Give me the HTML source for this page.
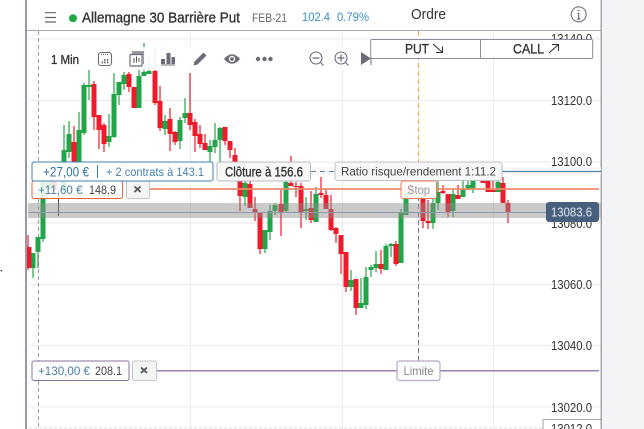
<!DOCTYPE html>
<html lang="fr"><head><meta charset="utf-8"><title>Ordre</title>
<style>
html,body{margin:0;padding:0;background:#fff;width:644px;height:429px;overflow:hidden}
svg{display:block;filter:blur(.3px)}
text{font-family:"Liberation Sans",sans-serif}
.m{stroke:#333;stroke-width:.35}
</style></head><body>
<svg width="644" height="429" viewBox="0 0 644 429" xmlns="http://www.w3.org/2000/svg">
<rect width="644" height="429" fill="#fff"/>
<rect x="602" y="0" width="42" height="429" fill="#f3f4f6"/>
<!-- grid -->
<path d="M29 39H601M29 100.5H601M29 162H601M29 223H601M29 284.5H601M29 345.5H601M29 407H601M190.5 31V429M342.5 31V429M493.5 31V429" stroke="#ebebef" stroke-width="1" fill="none"/>
<path d="M29 428H601" stroke="#ddd" stroke-dasharray="3 2"/>
<path d="M38.5 31V429" stroke="#a09cb0" stroke-dasharray="4 3" fill="none"/>
<path d="M418.5 31V178" stroke="#f5a623" stroke-dasharray="5 3" fill="none"/>
<path d="M418.5 180V361" stroke="#8d6fa8" stroke-dasharray="5 3" fill="none"/>
<!-- axis -->
<g font-size="12.5" fill="#333">
<text x="551" y="43" textLength="41" lengthAdjust="spacingAndGlyphs">13140.0</text>
<text x="551" y="105" textLength="41" lengthAdjust="spacingAndGlyphs">13120.0</text>
<text x="551" y="166" textLength="41" lengthAdjust="spacingAndGlyphs">13100.0</text>
<text x="551" y="228" textLength="41" lengthAdjust="spacingAndGlyphs">13080.0</text>
<text x="551" y="289" textLength="41" lengthAdjust="spacingAndGlyphs">13060.0</text>
<text x="551" y="350" textLength="41" lengthAdjust="spacingAndGlyphs">13040.0</text>
<text x="551" y="412" textLength="41" lengthAdjust="spacingAndGlyphs">13020.0</text>
</g>
<!-- candles green wicks -->
<path fill="none" stroke="#21a548" stroke-width="1.2" d="M33 253V278M38 237V268M43 180V242M64 125V165M69 121V158M79 112V165M84 83V135M89 70V100M109 114V147M114 73V138M119 82V105M124 72V90M139 65V108M144 43V72M149 55V72M165 115V135M180 117V149M185 98V123M210 140V162M215 123V153M220 127V162M245 181V206M265 230V253M270 205V240M275 203V215M286 180V212M306 197V220M316 187V222M351 270V291M361 278V308M366 267V309M371 265V277M376 251V272M386 244V270M391 243V257M401 209V263M406 185V215M433 195V229M438 180V210M453 190V217M463 180V197M468 178V190M473 175V193M498 180V192"/>
<!-- green bodies -->
<path fill="none" stroke="#21a548" stroke-width="5" d="M33 253V268M38 237V252M43 180V239M49 165V190M64 150V190M69 134V152M79 130V165M84 85V133M89 85V87M109 136V142M114 94V137M119 82V95M124 75V84M139 76V108M144 72V76M149 71V74M165 121V129M180 120V141M185 113V118M210 146V152M215 140V147M220 128V140M245 183V197M265 230V249M270 211V232M275 205V211M286 182V211M306 209V211M316 194V222M351 280V287M361 303V308M366 277V305M371 267V270M376 264V268M386 246V270M391 244V246M401 213V263M406 193V215M433 203V223M438 192V203M453 194V211M463 189V197M468 185V190M473 180V189M498 182V192"/>
<!-- red wicks -->
<path fill="none" stroke="#ee1c2b" stroke-width="1.2" d="M28 235V270M74 126V165M94 81V130M99 115V149M104 123V152M129 72V92M134 87V108M155 48V105M160 86V131M170 108V151M175 131V145M190 73V130M195 119V152M200 125V148M205 134V149M225 127V145M230 141V158M235 148V180M240 175V211M250 180V208M255 197V221M260 213V254M281 190V236M291 156V186M296 182V197M301 183V228M311 191V223M321 177V198M326 188V209M331 195V231M336 227V243M341 235V274M346 252V292M356 279V315M381 250V274M396 241V266M411 185V197M423 190V228M428 200V229M443 185V194M448 194V217M458 185V199M483 170V183M488 175V192M493 175V192M503 177V203M508 200V223"/>
<!-- red bodies -->
<path fill="none" stroke="#ee1c2b" stroke-width="5" d="M29 247V268M54 165V190M74 142V165M94 84V117M99 115V130M104 125V144M129 74V87M134 87V108M155 71V103M160 101V128M170 119V134M175 132V142M190 113V125M195 122V136M200 134V144M205 143V150M225 127V141M230 141V150M235 155V180M240 181V196M250 184V208M255 209V213M260 213V249M281 204V212M291 183V186M296 186V187M301 186V212M311 208V220M321 193V195M326 195V209M331 209V230M336 228V234M341 235V254M346 252V287M356 279V308M381 264V269M396 244V264M411 185V192M423 198V221M428 221V223M443 191V193M448 194V212M458 195V199M483 170V183M488 175V192M493 190V192M503 183V203M508 203V213"/>
<path d="M58.5 190V216" stroke="#444" stroke-width="1"/>
<!-- band -->
<rect x="28" y="203" width="573" height="15" fill="#8c8c8c" fill-opacity=".46"/>
<path d="M28 212.5H546" stroke="#8e98a8" stroke-width="1"/>
<!-- frame -->
<rect x="25" y="0" width="2" height="429" fill="#9a97a8"/>
<rect x="600.5" y="0" width="1.5" height="429" fill="#a5a3b0"/>
<rect x="27" y="0" width="573.5" height="30" fill="#fff"/>
<rect x="27" y="30" width="574" height="1" fill="#aaa8b5"/>
<path d="M0 270h2v1.5h-1z" fill="#555"/>
<!-- header -->
<path d="M45 12.7H56M45 17.5H56M45 22H56" stroke="#666" stroke-width="1.2"/>
<circle cx="73" cy="18.3" r="4" fill="#1fa84a"/>
<text class="m" x="82" y="22.500" font-size="15" fill="#333" textLength="158" lengthAdjust="spacingAndGlyphs">Allemagne 30 Barrière Put</text>
<text x="252" y="22" font-size="11.500" fill="#666" textLength="35" lengthAdjust="spacingAndGlyphs">FEB-21</text>
<text x="302" y="21" font-size="12" fill="#3d8ec9" textLength="28" lengthAdjust="spacingAndGlyphs">102.4</text>
<text x="337" y="21" font-size="12" fill="#3d8ec9" textLength="32" lengthAdjust="spacingAndGlyphs">0.79%</text>
<text x="411" y="19" font-size="14.500" fill="#333" textLength="35" lengthAdjust="spacingAndGlyphs">Ordre</text>
<circle cx="578.7" cy="14.3" r="7.5" fill="none" stroke="#73717f" stroke-width="1.1"/>
<path d="M577.5 10.5h2M578.7 13v6M577 19h3.4M577.3 13.2h1.4" stroke="#73717f" stroke-width="1.2" fill="none"/>
<!-- toolbar -->
<rect x="45" y="47" width="326" height="23" fill="#fff" fill-opacity=".9"/>
<text class="m" x="51" y="64" font-size="13" fill="#333" textLength="28" lengthAdjust="spacingAndGlyphs">1 Min</text>
<rect x="98.5" y="52.5" width="13" height="13" rx="2.5" fill="none" stroke="#6d6b7a" stroke-width="1.1" />
<path d="M101 54.5h8" stroke="#6d6b7a" stroke-dasharray="1 1"/>
<path d="M104 60h1.6M106.8 60h1.6M101.5 62.5h1.6M104 62.5h1.6M106.8 62.5h1.6" stroke="#555" stroke-width="1.5"/>
<rect x="132" y="51" width="12" height="4" fill="#9a98a4"/>
<rect x="143" y="52" width="1" height="12" fill="#9a98a4"/>
<rect x="130" y="54.5" width="12" height="11.5" rx="1" fill="#fff" stroke="#6d6b7a" stroke-width="1.2"/>
<path d="M134 58v5M136.5 56.5v6M139 58v4" stroke="#555" stroke-width="1"/>
<path d="M161 59h4v5h-4zM166.5 53h4v11h-4zM171.5 57h3.5v7h-3.5z" fill="#6d6b7a"/>
<path d="M161 65h14" stroke="#6d6b7a" stroke-width="1"/>
<path d="M193.5 65.5l1-4 9-9 3 3-9 9z" fill="#6d6b7a"/>
<path d="M224 59q8-9.500 16 0q-8 9.500-16 0z" fill="#6d6b7a"/>
<circle cx="232" cy="59" r="3.2" fill="#fff"/><circle cx="232" cy="59" r="1.9" fill="#6d6b7a"/>
<circle cx="258" cy="59" r="2.2" fill="#6d6b7a"/><circle cx="264.500" cy="59" r="2.2" fill="#6d6b7a"/><circle cx="270.500" cy="59" r="2.2" fill="#6d6b7a"/>
<circle cx="316" cy="58" r="6" fill="#fff" stroke="#6d6b7a" stroke-width="1.1"/>
<path d="M312.500 58h7M320.500 62.500l3 3" stroke="#6d6b7a" stroke-width="1.2"/>
<circle cx="341" cy="58" r="6" fill="#fff" stroke="#6d6b7a" stroke-width="1.1"/>
<path d="M337.500 58h7M341 54.500v7M345.500 62.500l3 3" stroke="#6d6b7a" stroke-width="1.2"/>
<path d="M361 52l10 6.500-10 6.500z" fill="#6d6b7a"/>
<path d="M371 58v7" stroke="#6d6b7a"/>
<!-- PUT CALL -->
<rect x="370.700" y="39.500" width="222" height="19" rx="1.500" fill="#fff" stroke="#8f8c9c"/>
<path d="M480.500 39.500V58.500" stroke="#8f8c9c"/>
<text class="m" x="405" y="53.500" font-size="14" fill="#333" textLength="24" lengthAdjust="spacingAndGlyphs">PUT</text>
<path d="M433 44l9.500 8.500M442.500 46.500v6h-6.500" fill="none" stroke="#333" stroke-width="1.1"/>
<text class="m" x="513" y="53.500" font-size="14" fill="#333" textLength="31" lengthAdjust="spacingAndGlyphs">CALL</text>
<path d="M549 53l9.500-8.500M552 44.500h6.500v6.500" fill="none" stroke="#333" stroke-width="1.1"/>
<!-- lines -->
<rect x="310" y="167" width="291" height="8" fill="#f6f6f8" fill-opacity=".8"/>
<path d="M311 171.500h24" stroke="#4d86a8" stroke-dasharray="5 4"/>
<path d="M500 171.500H601" stroke="#4d86a8" stroke-width="1.200"/>
<path d="M150 189H599" stroke="#ef8a6b" stroke-width="1.800"/>
<path d="M157 370.700H599" stroke="#9b80b0" stroke-width="1.500"/>
<!-- tag -->
<rect x="546" y="202" width="53" height="20" rx="3" fill="#46607e"/>
<text x="551" y="216.500" font-size="12.500" fill="#e6ebf0" textLength="41" lengthAdjust="spacingAndGlyphs">13083.6</text>
<!-- labels -->
<rect x="32" y="181" width="90.500" height="17.500" rx="2" fill="#fff" fill-opacity=".86" stroke="#e8623c"/>
<text x="38" y="194" font-size="12" fill="#4580a8" textLength="44.500" lengthAdjust="spacingAndGlyphs">+11,60 €</text>
<text x="89" y="194" font-size="12" fill="#444" textLength="27" lengthAdjust="spacingAndGlyphs">148.9</text>
<rect x="126.500" y="181" width="23" height="17.500" rx="2" fill="#f5f5f6" stroke="#c5c5cc"/>
<path d="M134.500 186.500l6 5.500M140.500 186.500l-6 5.500" stroke="#555" stroke-width="1.800"/>
<rect x="32" y="162" width="181" height="19" rx="2" fill="#fff" stroke="#3f80ab"/>
<text x="43" y="176.500" font-size="13.500" fill="#2f74a6" textLength="46" lengthAdjust="spacingAndGlyphs">+27,00 €</text>
<path d="M97.500 165V178" stroke="#3f80ab"/>
<text x="106" y="176" font-size="12" fill="#4580a8" textLength="98" lengthAdjust="spacingAndGlyphs">+ 2 contrats à 143.1</text>
<rect x="217" y="162" width="93.500" height="19" rx="2.500" fill="#f7f7f8" stroke="#b8b8c0"/>
<text class="m" x="225" y="176.500" font-size="13.500" fill="#333" textLength="78" lengthAdjust="spacingAndGlyphs">Clôture à 156.6</text>
<rect x="335" y="162" width="167" height="18.500" rx="2.500" fill="#f7f7f8" stroke="#c0c0c8"/>
<text x="341" y="175.500" font-size="12" fill="#444" textLength="155" lengthAdjust="spacingAndGlyphs">Ratio risque/rendement 1:11.2</text>
<rect x="401" y="181" width="35.500" height="17.500" rx="2" fill="#fff" fill-opacity=".88" stroke="#ec7a58"/>
<text x="407" y="194" font-size="12" fill="#9a9a9e" textLength="23" lengthAdjust="spacingAndGlyphs">Stop</text>
<rect x="32" y="361" width="97" height="19.500" rx="2" fill="#fff" stroke="#8a6f9e"/>
<text x="38" y="375" font-size="12" fill="#4580a8" textLength="52" lengthAdjust="spacingAndGlyphs">+130,00 €</text>
<text x="95" y="375" font-size="12" fill="#444" textLength="27" lengthAdjust="spacingAndGlyphs">208.1</text>
<rect x="132.500" y="361" width="24" height="19.500" rx="2" fill="#f5f5f6" stroke="#c5c5cc"/>
<path d="M141 367.500l6 5.500M147 367.500l-6 5.500" stroke="#555" stroke-width="1.800"/>
<rect x="397" y="361" width="43" height="19.500" rx="2.500" fill="#fff" stroke="#b9a8c8" stroke-width="1.200"/>
<text x="403.500" y="375" font-size="12" fill="#888" textLength="30" lengthAdjust="spacingAndGlyphs">Limite</text>
<!-- bottom box -->
<rect x="543" y="419.500" width="58" height="12" fill="#fff" stroke="#a5a3b0"/>
<text x="551" y="433" font-size="12.500" fill="#333" textLength="41" lengthAdjust="spacingAndGlyphs">13012.0</text>
</svg>
</body></html>
